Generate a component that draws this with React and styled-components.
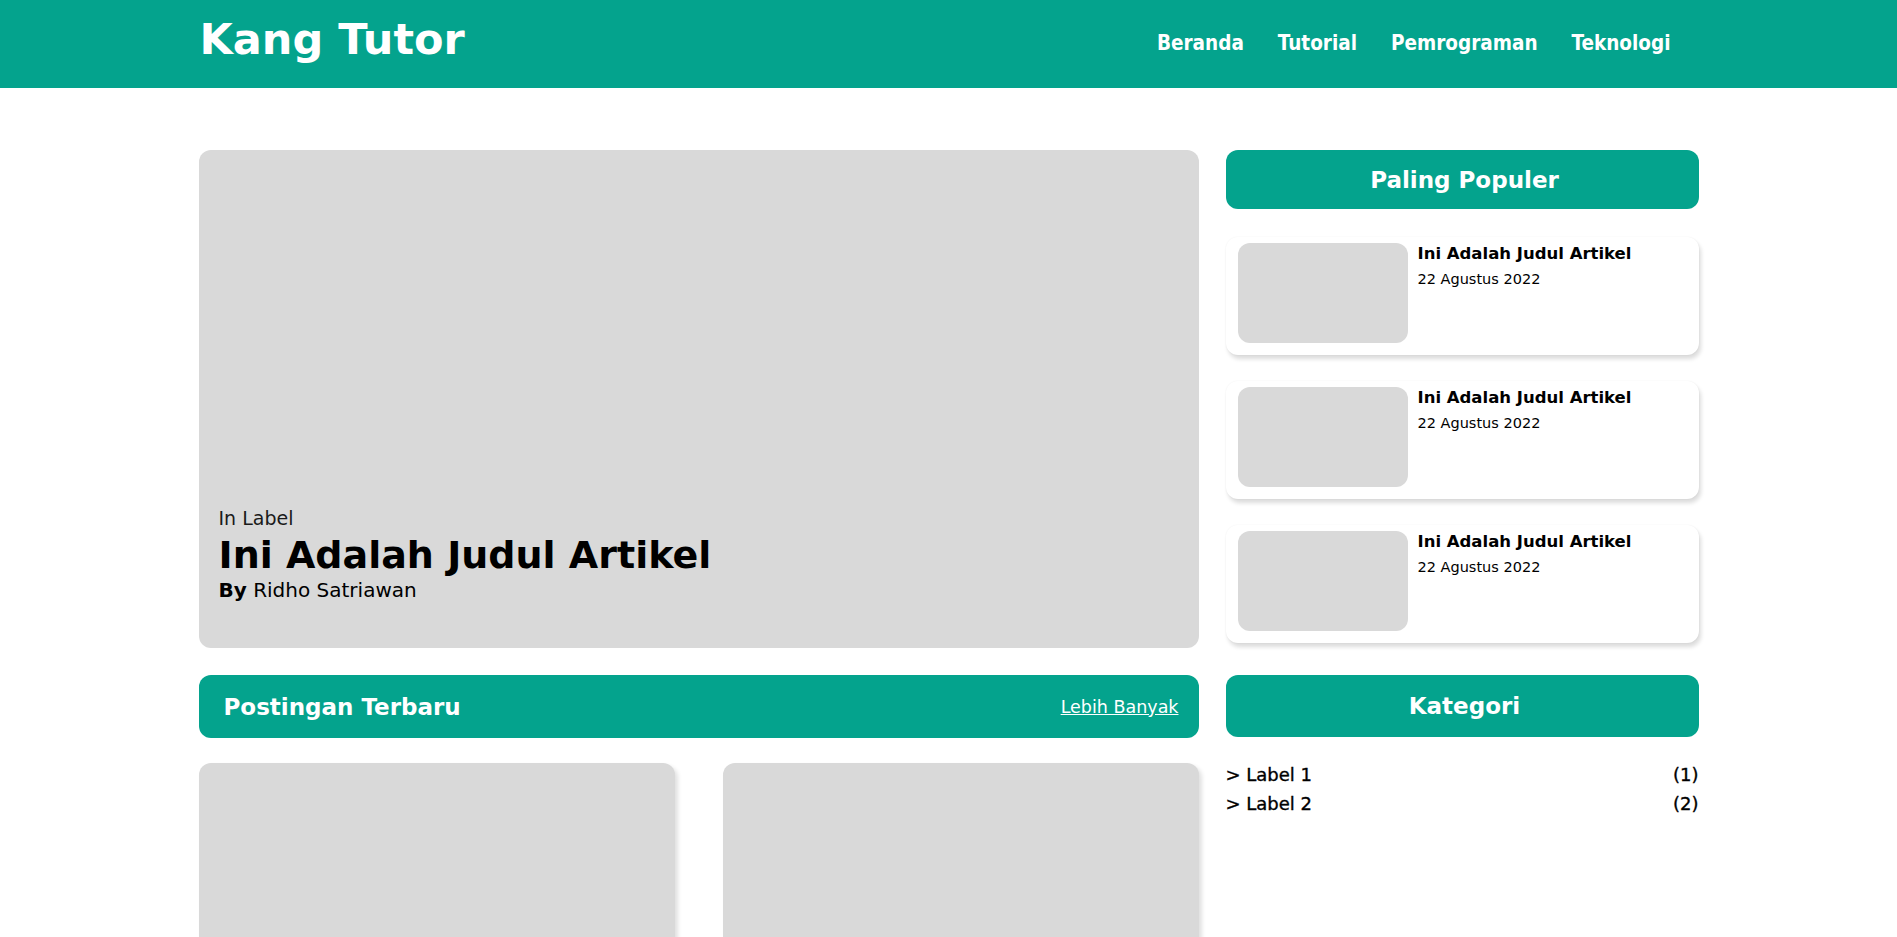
import React from "react";
import styled, { createGlobalStyle } from "styled-components";

//warna utama
const teal = "#04a38d";
const grey = "#d9d9d9";

const GlobalStyle = createGlobalStyle`
  body {
    margin: 0;
    font-family: "DejaVu Sans", Verdana, sans-serif;
    color: #000;
    background: #fff;
  }
  * {
    box-sizing: border-box;
  }
`;

//navbar
const Header = styled.header`
  background: ${teal};
  height: 88px;
`;

const Wrap = styled.div`
  width: 1500px;
  margin: 0 auto;
`;

const HeaderInner = styled(Wrap)`
  height: 100%;
  display: flex;
  align-items: center;
  justify-content: space-between;
  padding: 0 28px 0 1px;
`;

const Logo = styled.div`
  color: white;
  font-size: 43px;
  font-weight: 700;
  margin-bottom: 10px;
`;

const Nav = styled.nav`
  display: flex;
  gap: 34px;
  margin-bottom: 2px;
`;

const NavLink = styled.a`
  color: white;
  font-family: "DejaVu Sans Condensed", "DejaVu Sans", sans-serif;
  font-size: 20.5px;
  font-weight: 700;
  text-decoration: none;
`;

//layout utama
const Main = styled(Wrap)`
  margin-top: 62px;
  display: grid;
  grid-template-columns: 1000px 1fr;
  column-gap: 27px;
  row-gap: 27px;
`;

const Hero = styled.div`
  background: ${grey};
  border-radius: 12px;
  height: 498px;
  display: flex;
  flex-direction: column;
  justify-content: flex-end;
  padding: 0 20px 46px;
`;

const HeroLabel = styled.div`
  font-size: 19px;
  line-height: 23px;
  color: #1a1a1a;
`;

const HeroTitle = styled.h1`
  margin: 4px 0 0;
  font-size: 38px;
  font-weight: 700;
  line-height: 42px;
`;

const HeroBy = styled.div`
  margin-top: 2px;
  font-size: 20px;
  line-height: 24px;
  b {
    font-weight: 700;
  }
`;

const Side = styled.div`
  display: flex;
  flex-direction: column;
`;

//judul box hijau
const Bar = styled.div`
  background: ${teal};
  color: white;
  border-radius: 12px;
  height: ${props => props.h || 60}px;
  display: flex;
  align-items: center;
  justify-content: ${props => (props.center ? "center" : "space-between")};
  padding: 0 20px 0 25px;
`;

const BarTitle = styled.h2`
  margin: 0;
  font-size: 23px;
  font-weight: 700;
`;

const MoreLink = styled.a`
  color: white;
  font-size: 17.5px;
  text-decoration: underline;
`;

const PopularList = styled.div`
  margin-top: 28px;
  display: flex;
  flex-direction: column;
  gap: 26px;
`;

const PopularCard = styled.div`
  background: white;
  border-radius: 12px;
  box-shadow: 2px 4px 4px rgba(0, 0, 0, 0.14), 0 0 2px rgba(0, 0, 0, 0.06);
  height: 118px;
  padding: 6px 12px 12px;
  display: flex;
  gap: 10px;
`;

const Thumb = styled.div`
  width: 170px;
  height: 100px;
  flex-shrink: 0;
  background: ${grey};
  border-radius: 12px;
`;

const CardTitle = styled.div`
  margin-top: 1px;
  font-size: 16.5px;
  font-weight: 700;
  line-height: 20px;
`;

const CardDate = styled.div`
  margin-top: 6px;
  font-size: 14.5px;
  line-height: 18px;
`;

const PostGrid = styled.div`
  margin-top: 25px;
  display: grid;
  grid-template-columns: 1fr 1fr;
  gap: 48px;
`;

const PostCard = styled.div`
  background: ${grey};
  border-radius: 12px;
  height: 320px;
  box-shadow: 3px 3px 4px rgba(0, 0, 0, 0.12);
`;

const CatList = styled.ul`
  list-style: none;
  margin: 23px 0 0;
  padding: 0;
`;

const CatItem = styled.li`
  display: flex;
  justify-content: space-between;
  font-size: 18px;
  line-height: 29px;
  -webkit-text-stroke: 0.35px #000;
`;

const populer = [1, 2, 3];
const kategori = [
  { name: "Label 1", count: 1 },
  { name: "Label 2", count: 2 }
];

function App() {
  return (
    <>
      <GlobalStyle />
      <Header>
        <HeaderInner>
          <Logo>Kang Tutor</Logo>
          <Nav>
            <NavLink href="#">Beranda</NavLink>
            <NavLink href="#">Tutorial</NavLink>
            <NavLink href="#">Pemrograman</NavLink>
            <NavLink href="#">Teknologi</NavLink>
          </Nav>
        </HeaderInner>
      </Header>

      <Main>
        <Hero>
          <HeroLabel>In Label</HeroLabel>
          <HeroTitle>Ini Adalah Judul Artikel</HeroTitle>
          <HeroBy>
            <b>By</b> Ridho Satriawan
          </HeroBy>
        </Hero>

        <Side>
          <Bar center h={59}>
            <BarTitle>Paling Populer</BarTitle>
          </Bar>
          <PopularList>
            {populer.map(i => (
              <PopularCard key={i}>
                <Thumb />
                <div>
                  <CardTitle>Ini Adalah Judul Artikel</CardTitle>
                  <CardDate>22 Agustus 2022</CardDate>
                </div>
              </PopularCard>
            ))}
          </PopularList>
        </Side>

        <div>
          <Bar h={63}>
            <BarTitle>Postingan Terbaru</BarTitle>
            <MoreLink href="#">Lebih Banyak</MoreLink>
          </Bar>
          <PostGrid>
            <PostCard />
            <PostCard />
          </PostGrid>
        </div>

        <Side>
          <Bar center h={62}>
            <BarTitle>Kategori</BarTitle>
          </Bar>
          <CatList>
            {kategori.map(k => (
              <CatItem key={k.name}>
                <span>&gt; {k.name}</span>
                <span>({k.count})</span>
              </CatItem>
            ))}
          </CatList>
        </Side>
      </Main>
    </>
  );
}

export default App;
